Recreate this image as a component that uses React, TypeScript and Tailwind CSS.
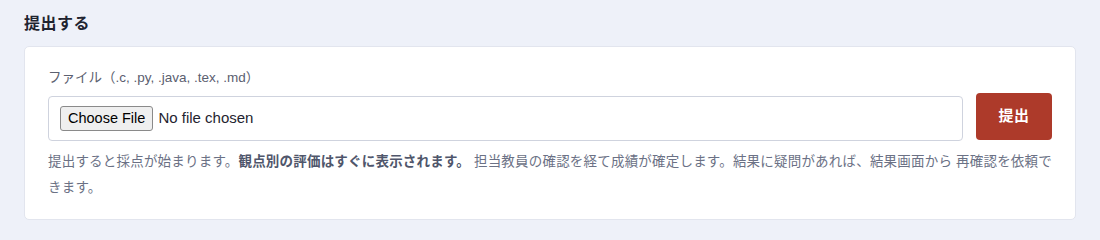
export default function App() {
  return (
    <div
      className="min-h-[240px] bg-[#eef1f9] px-6 pt-3 pb-6"
      style={{ fontFamily: '"Liberation Sans", "Noto Sans CJK JP", sans-serif' }}
    >
      <h2 className="mb-[10px] text-[16px] leading-6 font-bold tracking-[0.5px] text-[#1f2430]">提出する</h2>
      <div className="rounded-[5px] border border-[#e2e5ee] bg-white px-[23px] pt-[21px] pb-[18px]">
        <label className="mb-[5px] block text-[13.5px] leading-5 text-[#5b6070]">
          ファイル（.c, .py, .java, .tex, .md）
        </label>
        <div className="flex items-start gap-[13px]">
          <div className="mt-[3px] flex h-[45px] flex-1 items-center rounded-[4px] border border-[#cfd3de] px-[11px]">
            <input
              type="file"
              className="text-[15px] text-[#1f2430] file:mr-[5px] file:rounded-[3px] file:border file:border-[#8a8a8a] file:bg-[#efefef] file:px-[7px] file:py-[1px] file:text-[14.5px] file:text-black"
            />
          </div>
          <button className="h-[47px] w-[76px] rounded-[4px] bg-[#ad3a2a] text-[15px] font-bold tracking-[0.5px] text-white">
            提出
          </button>
        </div>
        <p className="mt-[8px] text-[13.5px] leading-[26px] tracking-[0.2px] text-[#6b7185]">
          提出すると採点が始まります。
          <strong className="font-bold text-[#4f566b]">観点別の評価はすぐに表示されます。</strong>{" "}
          担当教員の確認を経て成績が確定します。結果に疑問があれば、結果画面から 再確認を依頼できます。
        </p>
      </div>
    </div>
  );
}
